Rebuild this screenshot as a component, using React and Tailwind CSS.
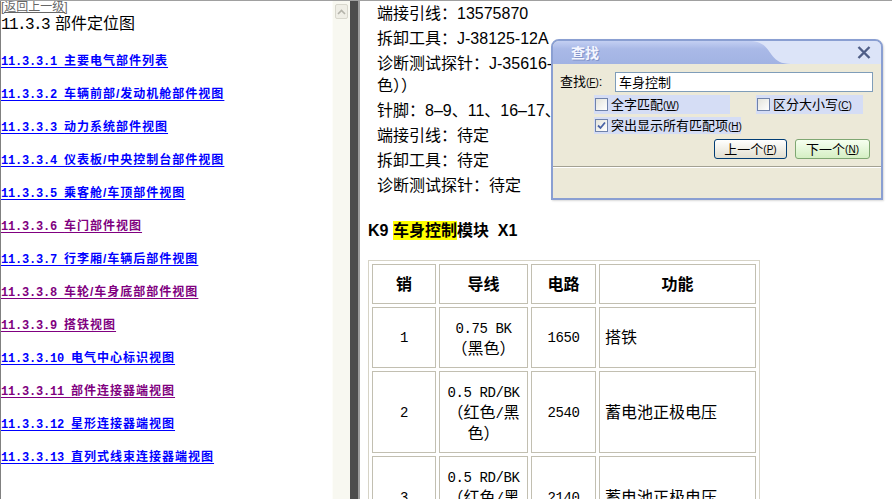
import React from 'react';

const links = [
  ['11.3.3.1', '主要电气部件列表', false],
  ['11.3.3.2', '车辆前部/发动机舱部件视图', false],
  ['11.3.3.3', '动力系统部件视图', false],
  ['11.3.3.4', '仪表板/中央控制台部件视图', false],
  ['11.3.3.5', '乘客舱/车顶部件视图', false],
  ['11.3.3.6', '车门部件视图', true],
  ['11.3.3.7', '行李厢/车辆后部件视图', false],
  ['11.3.3.8', '车轮/车身底部部件视图', true],
  ['11.3.3.9', '搭铁视图', true],
  ['11.3.3.10', '电气中心标识视图', false],
  ['11.3.3.11', '部件连接器端视图', true],
  ['11.3.3.12', '星形连接器端视图', false],
  ['11.3.3.13', '直列式线束连接器端视图', false],
];

const rows = [
  { pin: '1', wire: ['0.75 BK', '（黑色）'], circuit: '1650', fn: '搭铁', h: 'h-[61px]' },
  { pin: '2', wire: ['0.5 RD/BK', '（红色/黑', '色）'], circuit: '2540', fn: '蓄电池正极电压', h: 'h-[82px]' },
  { pin: '3', wire: ['0.5 RD/BK', '（红色/黑', '色）'], circuit: '2140', fn: '蓄电池正极电压', h: 'h-[82px]' },
];

// mixed ascii/cjk text in a cell: ascii bits get the narrower mono face
const Mixed = ({ text }) => {
  const parts = text.split(/([\x20-\x7e]+)/).filter(Boolean);
  return parts.map((p, i) =>
    /^[\x20-\x7e]+$/.test(p) ? (
      <span key={i} className="font-['Liberation_Mono',monospace] text-[14px] tracking-[-0.4px]">{p}</span>
    ) : (
      <span key={i}>{p}</span>
    )
  );
};

const Hot = ({ k }) => (
  <span className="text-[10px]">(<span className="underline">{k}</span>)</span>
);

const Check = ({ checked }) => (
  <span className="w-[13px] h-[13px] border border-[#6f82ab] bg-linear-to-br from-[#e4e4dc] to-white flex items-center justify-center shrink-0">
    {checked && (
      <svg width="9" height="9" viewBox="0 0 9 9">
        <path d="M1 4.5 L3.5 7 L8 1.5" fill="none" stroke="#4862a6" strokeWidth="1.8" />
      </svg>
    )}
  </span>
);

const FindDialog = () => (
  <div className="absolute left-[551px] top-[38px] w-[332px] h-[161px] border-2 border-[#8a9fd2] rounded-t-[8px] bg-[#ece9d8] flex flex-col overflow-hidden font-['Liberation_Sans','Noto_Sans_CJK_SC',sans-serif] text-[13px] leading-[15px] text-black whitespace-nowrap shadow-[1px_1px_2px_rgba(0,0,0,0.15)]">
    <div className="relative h-[23px] shrink-0">
      <svg className="absolute inset-0" width="328" height="23" viewBox="0 0 328 23" preserveAspectRatio="none">
        <defs>
          <linearGradient id="tb" x1="0" y1="0" x2="0" y2="1">
            <stop offset="0" stopColor="#c3cff2" />
            <stop offset="0.35" stopColor="#a9b9e7" />
            <stop offset="1" stopColor="#a2b3e3" />
          </linearGradient>
        </defs>
        <rect width="328" height="23" fill="url(#tb)" />
        <path d="M196 0 C222 0 212 23 238 23 L328 23 L328 0 Z" fill="#dce4f8" />
      </svg>
      <div className="relative flex items-center h-full pl-[18px] pr-[6px]">
        <span className="font-bold text-[14px] leading-[16px] text-[#f4f6ff] [text-shadow:1px_1px_0_#8193c8]">查找</span>
        <svg className="ml-auto mr-[4px]" width="14" height="13" viewBox="0 0 14 13">
          <path d="M1.5 1 L12.5 12 M12.5 1 L1.5 12" stroke="#4f5e87" strokeWidth="2.4" />
        </svg>
      </div>
    </div>

    <div className="flex items-center h-[20px] mt-[8px] pl-[7px]">
      <span className="w-[55px]">查找<Hot k="F" />:</span>
      <div className="w-[258px] h-[20px] border border-[#7f9db9] bg-white flex items-center pl-[3px]">车身控制</div>
    </div>

    <div className="flex items-center h-[19px] mt-[3px] pl-[41px]">
      <div className="w-[136px] h-full bg-[#d5ddf5] flex items-center pl-[1px] gap-[3px]">
        <Check />
        <span>全字匹配<Hot k="W" /></span>
      </div>
      <div className="ml-[26px] w-[107px] h-full bg-[#d5ddf5] flex items-center pl-[1px] gap-[3px]">
        <Check />
        <span>区分大小写<Hot k="C" /></span>
      </div>
    </div>

    <div className="flex items-center h-[17px] mt-[3px] pl-[41px]">
      <div className="w-[147px] h-full bg-[#d5ddf5] flex items-center pl-[1px] gap-[3px]">
        <Check checked />
        <span>突出显示所有匹配项<Hot k="H" /></span>
      </div>
    </div>

    <div className="flex items-center h-[20px] mt-[5px] pl-[161px] gap-[8px]">
      <div className="w-[73px] h-full border border-[#003c74] rounded-[3px] bg-linear-to-b from-white to-[#e2dfd0] flex items-center justify-center">
        上一个<Hot k="P" />
      </div>
      <div className="w-[75px] h-full border border-[#7fa772] rounded-[3px] bg-linear-to-b from-[#f6fff0] to-[#d5efc4] flex items-center justify-center">
        下一个<Hot k="N" />
      </div>
    </div>

    <div className="mt-[7px] h-[2px] border-t border-[#a3a193] border-b border-b-white" />
  </div>
);

export default function App() {
  return (
    <div className="relative w-[892px] h-[499px] overflow-hidden flex border-t border-[#a0a0a0] bg-white">
      {/* left frame */}
      <div className="w-[332px] shrink-0 border-l border-[#808080] flex flex-col font-['Liberation_Sans','Noto_Sans_CJK_SC',sans-serif]">
        <a className="text-[12px] leading-[12px] text-[#666666] underline w-fit">[返回上一级]</a>
        <div className="text-[16px] leading-[19px] mt-[1px] text-black">
          <span className="font-['Liberation_Mono',monospace] tracking-[-1.6px]">11.3.3</span>
          <span className="ml-[6px]">部件定位图</span>
        </div>
        <div className="mt-[10px] flex flex-col">
          {links.map(([n, t, visited]) => (
            <div key={n} className="h-[33px] flex items-center">
              <a
                className={`font-bold text-[12px] underline underline-offset-[2px] ${visited ? 'text-[#800080]' : 'text-[#0000ff]'}`}
              >
                <span className="font-['Liberation_Mono',monospace] tracking-[-0.2px]">{n} </span>
                <span className="tracking-[1px]">{t}</span>
              </a>
            </div>
          ))}
        </div>
      </div>

      {/* left frame scrollbar */}
      <div className="w-[18px] shrink-0 bg-[#f8f8f1] border-l border-[#fdfdf9] pt-[3px] pl-[2px]">
        <div className="w-[13px] h-[15px] rounded-[2px] border border-[#d8d7cd] bg-[#efeee6] flex items-center justify-center">
          <svg width="9" height="6" viewBox="0 0 9 6">
            <path d="M1 5 L4.5 1.5 L8 5" fill="none" stroke="#b4b3aa" strokeWidth="1.6" />
          </svg>
        </div>
      </div>

      {/* splitter */}
      <div className="w-[8px] shrink-0 bg-[#4d4d4d]" />

      {/* right frame */}
      <div className="flex-1 border-l-2 border-[#9c9c9c] bg-white pl-[8px] pt-[2px] flex flex-col text-black font-['Liberation_Sans','Noto_Sans_CJK_SC',sans-serif] text-[16px]">
        <div className="ml-[9px] flex flex-col whitespace-nowrap">
          <p className="leading-[22px] mb-[3px]">端接引线：13575870</p>
          <p className="leading-[22px] mb-[3px]">拆卸工具：J-38125-12A</p>
          <p className="leading-[22px] mb-[3px]">诊断测试探针：J-35616-64B（L 形探针（灰<br />色））</p>
          <p className="leading-[22px] mb-[3px]">针脚：8–9、11、16–17、19–20、22–24</p>
          <p className="leading-[22px] mb-[3px]">端接引线：待定</p>
          <p className="leading-[22px] mb-[3px]">拆卸工具：待定</p>
          <p className="leading-[22px] mb-[3px]">诊断测试探针：待定</p>
        </div>

        <h3 className="mt-[20px] leading-[22px] font-bold text-[16px] whitespace-pre">
          K9 <span className="inline-block bg-[#ffff00] leading-[19px]">车身控制</span>模块  X1
        </h3>

        <table className="mt-[18px] w-[392px] border-separate border-spacing-[3px] border border-[#d6d3c6] text-[16px] leading-[19px]">
          <thead>
            <tr className="h-[40px]">
              <th className="w-[64px] border border-[#c2bfb1] font-bold">销</th>
              <th className="w-[89px] border border-[#c2bfb1] font-bold">导线</th>
              <th className="w-[65px] border border-[#c2bfb1] font-bold">电路</th>
              <th className="border border-[#c2bfb1] font-bold">功能</th>
            </tr>
          </thead>
          <tbody>
            {rows.map((r) => (
              <tr key={r.pin} className={r.h}>
                <td className="border border-[#c2bfb1] text-center">
                  <Mixed text={r.pin} />
                </td>
                <td className="border border-[#c2bfb1] text-center">
                  {r.wire.map((w, i) => (
                    <div key={i}><Mixed text={w} /></div>
                  ))}
                </td>
                <td className="border border-[#c2bfb1] text-center">
                  <Mixed text={r.circuit} />
                </td>
                <td className="border border-[#c2bfb1] pl-[5px]">{r.fn}</td>
              </tr>
            ))}
          </tbody>
        </table>
      </div>

      <FindDialog />
    </div>
  );
}
